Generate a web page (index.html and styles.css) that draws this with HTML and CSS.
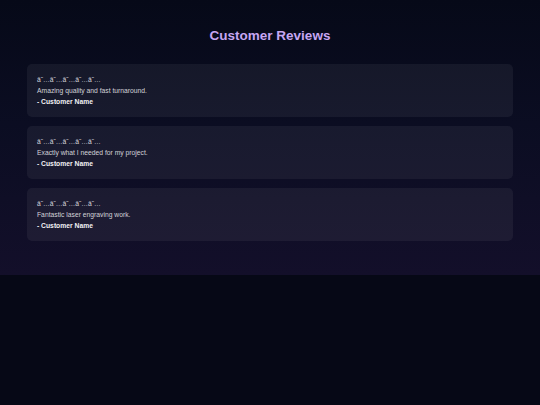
FILE: index.html
```html
<!DOCTYPE html>
<html lang="en">
<head>
<meta charset="utf-8">
<title>Customer Reviews</title>
<link rel="stylesheet" href="styles.css">
</head>
<body>
<section class="reviews">
  <h2 class="reviews-title">Customer Reviews</h2>
  <div class="review-list">
    <div class="review-card">
      <div class="stars">â˜…â˜…â˜…â˜…â˜…</div>
      <p class="review-text">Amazing quality and fast turnaround.</p>
      <p class="review-author">- Customer Name</p>
    </div>
    <div class="review-card">
      <div class="stars">â˜…â˜…â˜…â˜…â˜…</div>
      <p class="review-text">Exactly what I needed for my project.</p>
      <p class="review-author">- Customer Name</p>
    </div>
    <div class="review-card">
      <div class="stars">â˜…â˜…â˜…â˜…â˜…</div>
      <p class="review-text">Fantastic laser engraving work.</p>
      <p class="review-author">- Customer Name</p>
    </div>
  </div>
</section>
</body>
</html>
```
FILE: styles.css
```css
html, body {
  margin: 0;
  padding: 0;
}

body {
  background: #060816;
  font-family: "Liberation Sans", Arial, sans-serif;
  color: #d4d4dc;
  min-height: 405px;
}

.reviews {
  padding: 28px 27px 34px;
  background: linear-gradient(180deg, #060918 0%, #0b0d22 45%, #130f2a 100%);
}

.reviews-title {
  margin: 0 0 21px;
  text-align: center;
  font-size: 13.5px;
  line-height: 15px;
  font-weight: bold;
  color: #c6a6f2;
}

.review-list {
  display: flex;
  flex-direction: column;
  gap: 9px;
}

.review-card {
  background: rgba(255, 255, 255, 0.055);
  border-radius: 5px;
  padding: 9.5px 10px 10.5px;
  font-size: 6.75px;
  line-height: 11px;
}

.stars {
  color: #d6d6dc;
}

.review-text {
  margin: 0;
  color: #d2d2d8;
}

.review-author {
  margin: 0;
  font-weight: bold;
  color: #f2f2f4;
}
```
